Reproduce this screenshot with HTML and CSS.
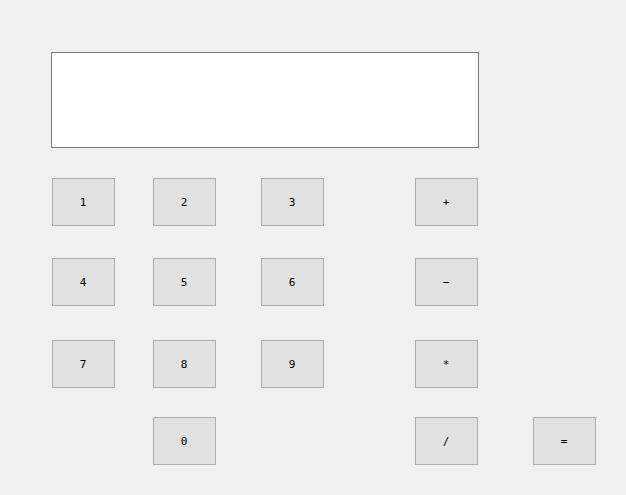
FILE: index.html
```html
<!DOCTYPE html>
<html lang="en">
<head>
  <meta charset="UTF-8" />
  <title>Calculator</title>
  <link rel="stylesheet" href="styles.css">
</head>
<body>
  <!-- Calculator window -->
  <div class="calc">
    <div class="display"></div>
    <div class="keys">
      <button class="key">1</button>
      <button class="key">2</button>
      <button class="key">3</button>
      <button class="key">+</button>
      <span></span>

      <button class="key">4</button>
      <button class="key">5</button>
      <button class="key">6</button>
      <button class="key">−</button>
      <span></span>

      <button class="key">7</button>
      <button class="key">8</button>
      <button class="key">9</button>
      <button class="key">*</button>
      <span></span>

      <span></span>
      <button class="key">0</button>
      <span></span>
      <button class="key">/</button>
      <button class="key">=</button>
    </div>
  </div>
</body>
</html>
```

FILE: styles.css
```css
body {
  margin: 0;
  background-color: #f0f0f0;
  font-family: 'DejaVu Sans Mono', monospace;
}
.calc {
  padding: 52px 0 0 51px;
}
/* Display field */
.display {
  width: 426px;
  height: 94px;
  background: #fff;
  border: 1px solid #7a7a7a;
}
/* Button grid */
.keys {
  display: grid;
  grid-template-columns: 101px 108px 154px 118px 63px;
  grid-template-rows: 80px 82px 77px 48px;
  margin: 30px 0 0 1px;
}
.key {
  width: 63px;
  height: 48px;
  padding: 0 1px 0 0;
  background: #e1e1e1;
  border: 1px solid #adadad;
  border-radius: 0;
  font-family: 'DejaVu Sans Mono', monospace;
  font-size: 11px;
  color: #000;
}
```
